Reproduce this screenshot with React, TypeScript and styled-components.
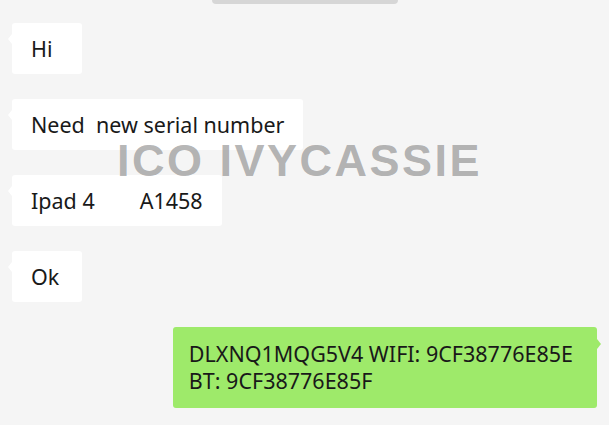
import React from "react";
import styled, { createGlobalStyle } from "styled-components";

const GlobalStyle = createGlobalStyle`
  html, body {
    margin: 0;
    padding: 0;
    background: #f5f5f5;
  }
  body {
    font-family: "Noto Sans", "Open Sans", sans-serif;
  }
`;

const Page = styled.div`
  position: relative;
  width: 609px;
  height: 425px;
  overflow: hidden;
  background: #f5f5f5;
  display: flex;
  flex-direction: column;
`;

const TopBar = styled.div`
  align-self: center;
  width: 186px;
  height: 4px;
  border-radius: 0 0 4px 4px;
  background: #d6d6d6;
`;

const MessageList = styled.div`
  display: flex;
  flex-direction: column;
  gap: 25px;
  padding: 19px 12px 0;
`;

const Row = styled.div<{ $mine?: boolean }>`
  display: flex;
  justify-content: ${(p) => (p.$mine ? "flex-end" : "flex-start")};
`;

const Bubble = styled.div<{ $mine?: boolean }>`
  position: relative;
  min-width: 70px;
  box-sizing: border-box;
  padding: ${(p) => (p.$mine ? "13px 24px 14px 16px" : "12px 19px 12px 19px")};
  border-radius: 3px;
  background: ${(p) => (p.$mine ? "#9eea6a" : "#ffffff")};
  color: #191919;
  font-size: 21.5px;
  line-height: 27px;
  white-space: pre-wrap;

  &::before {
    content: "";
    position: absolute;
    top: ${(p) => (p.$mine ? "12px" : "11px")};
    ${(p) => (p.$mine ? "right: -4px;" : "left: -4px;")}
    border-top: 5px solid transparent;
    border-bottom: 5px solid transparent;
    ${(p) =>
      p.$mine
        ? "border-left: 4px solid #9eea6a;"
        : "border-right: 4px solid #ffffff;"}
  }
`;

const Spacer = styled.span<{ $w: number }>`
  display: inline-block;
  width: ${(p) => p.$w}px;
`;

const Watermark = styled.div`
  position: absolute;
  left: 117px;
  top: 137px;
  font-family: "Liberation Sans", Arial, sans-serif;
  font-weight: 700;
  font-size: 45px;
  line-height: 48px;
  letter-spacing: 2.5px;
  color: rgba(140, 140, 140, 0.65);
  pointer-events: none;
  white-space: nowrap;
`;

const App = () => {
  return (
    <Page>
      <GlobalStyle />
      <TopBar />
      <MessageList>
        <Row>
          <Bubble>Hi</Bubble>
        </Row>
        <Row>
          <Bubble>Need  new serial number</Bubble>
        </Row>
        <Row>
          <Bubble>
            Ipad 4<Spacer $w={45} />A1458
          </Bubble>
        </Row>
        <Row>
          <Bubble>Ok</Bubble>
        </Row>
        <Row $mine>
          <Bubble $mine>
            DLXNQ1MQG5V4 WIFI: 9CF38776E85E
            {"\n"}BT: 9CF38776E85F
          </Bubble>
        </Row>
      </MessageList>
      <Watermark>ICO IVYCASSIE</Watermark>
    </Page>
  );
};

export default App;
